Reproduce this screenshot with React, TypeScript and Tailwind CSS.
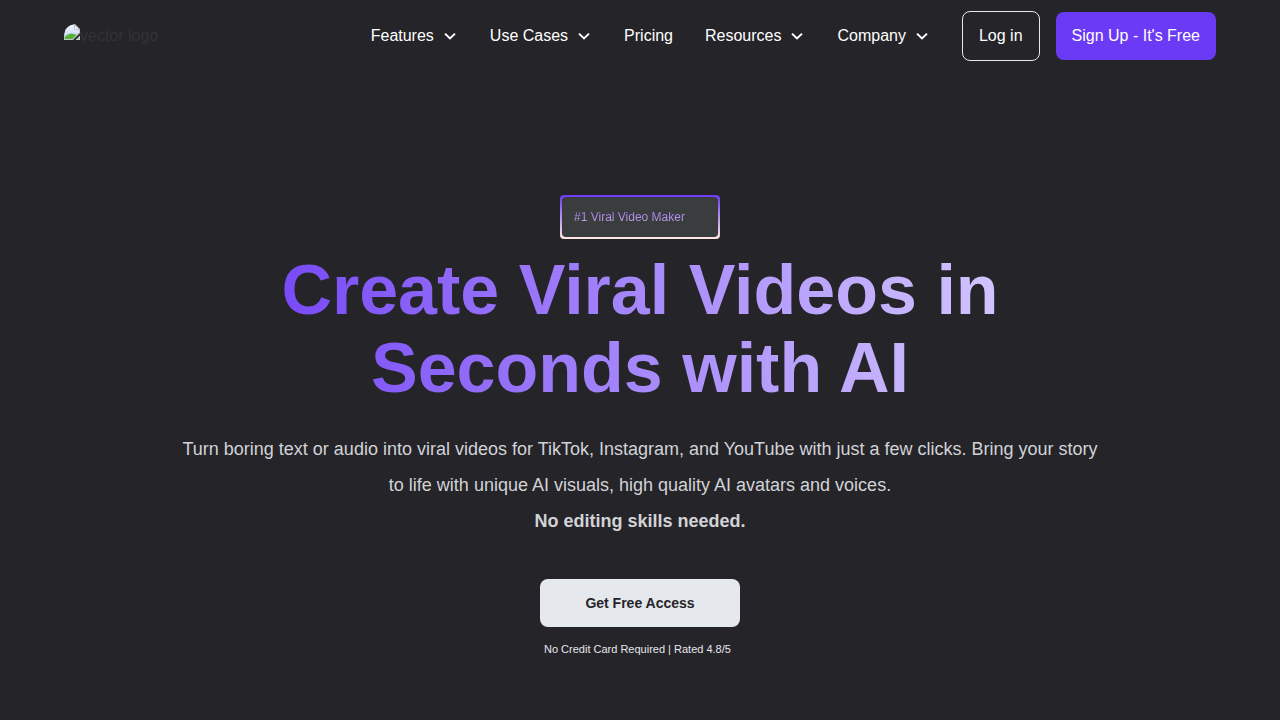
type NavEntry = { label: string; menu: boolean };

const entries: NavEntry[] = [
  { label: "Features", menu: true },
  { label: "Use Cases", menu: true },
  { label: "Pricing", menu: false },
  { label: "Resources", menu: true },
  { label: "Company", menu: true },
];

function Chevron() {
  return (
    <svg className="size-4" viewBox="0 0 16 16" fill="none" aria-hidden="true">
      <path d="M3 5.6 8 10.4 13 5.6" stroke="currentColor" strokeWidth="2" />
    </svg>
  );
}

function MissingImage() {
  return (
    <svg className="size-4 rounded-tl-xl" viewBox="0 0 16 16" aria-hidden="true">
      <defs>
        <linearGradient id="sky" x1="0" y1="0" x2="0" y2="1">
          <stop offset="0" stopColor="#f2f5fd" />
          <stop offset="1" stopColor="#bdd3fa" />
        </linearGradient>
      </defs>
      <path d="M0 0H11L16 5V9L9 16H0Z" fill="#c3c6cc" />
      <path d="M1 1H10.5L15 5.5V8.6L8.6 15H1Z" fill="url(#sky)" />
      <path d="M1 15V13.2C3 10.8 5.5 9.4 8 9.6L12.8 10.8 8.6 15Z" fill="#52b437" />
      <path d="M10.5 1V5.5H15Z" fill="#fff" stroke="#b3b6bc" strokeWidth="0.8" />
      <path d="M16 11.5V16H11.5Z" fill="#cdd6d0" />
      <path d="M15 13V15H13Z" fill="#8bc47c" />
    </svg>
  );
}

export default function App() {
  return (
    <div className="min-h-screen bg-[#252429] font-['Liberation_Sans',Arial,sans-serif] text-white">
      <header className="flex h-[72px] items-center justify-between px-16">
        <a href="#" className="flex items-start text-[#333333]">
          <MissingImage />
          <span className="text-base leading-6">vector logo</span>
        </a>
        <div className="flex items-center gap-8">
          <nav className="flex items-center gap-8">
            {entries.map((entry) =>
              entry.menu ? (
                <button key={entry.label} type="button" className="flex items-center gap-2 text-base leading-6">
                  {entry.label}
                  <Chevron />
                </button>
              ) : (
                <a key={entry.label} href="#" className="text-base leading-6">
                  {entry.label}
                </a>
              ),
            )}
          </nav>
          <div className="flex items-center gap-4">
            <a href="#" className="rounded-lg border border-[#e5e8ec] px-4 py-3 text-base leading-6">
              Log in
            </a>
            <a href="#" className="rounded-lg bg-[#6b3af4] px-4 py-3 text-base leading-6">
              Sign Up - It's Free
            </a>
          </div>
        </div>
      </header>

      <main className="flex flex-col items-center px-16 pt-[123px] text-center">
        <div className="w-40 rounded-sm bg-linear-to-b/srgb from-[#6b3af4] to-[#ffe9e3] p-0.5">
          <div className="rounded-sm bg-[#3a3d3e] px-3 py-3 text-left text-xs leading-4">
            <span className="bg-linear-to-b/srgb from-[#9d70f0] to-[#cfaee8] bg-clip-text text-transparent">
              #1 Viral Video Maker
            </span>
          </div>
        </div>
        <h1 className="mt-3 max-w-[768px] bg-linear-to-r/srgb from-[#7546f6] via-[#a688fa] to-[#d5c8ff] bg-clip-text text-[70px] leading-[78px] font-bold text-transparent">
          Create Viral Videos in Seconds with AI
        </h1>
        <p className="mt-6 max-w-[928px] text-lg leading-9 text-[#d1d3d7]">
          Turn boring text or audio into viral videos for TikTok, Instagram, and YouTube with just a few clicks. Bring
          your story to life with unique AI visuals, high quality AI avatars and voices.
          <br />
          <strong>No editing skills needed.</strong>
        </p>
        <div className="mt-10 w-[200px]">
          <button
            type="button"
            className="h-12 w-full rounded-lg bg-[#e5e8ec] text-sm leading-5 font-bold text-[#252429]"
          >
            Get Free Access
          </button>
          <p className="mt-3.5 px-1 text-left text-[11px] leading-4 text-[#e5e8ec]">
            No Credit Card Required | Rated 4.8/5
          </p>
        </div>
      </main>
    </div>
  );
}
